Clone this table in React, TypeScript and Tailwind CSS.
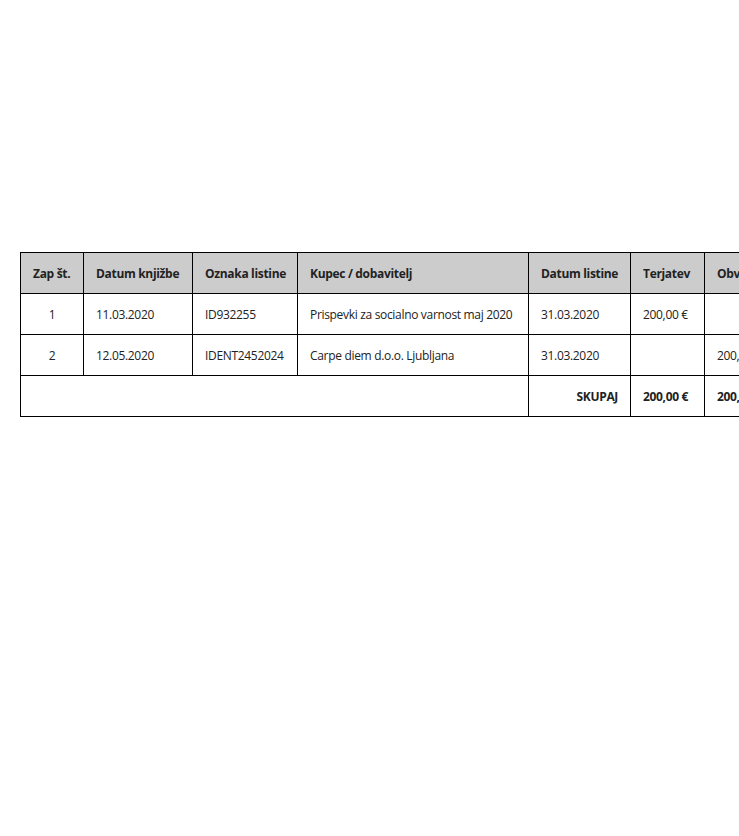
export default function App() {
  const th = 'border border-black bg-[#cccccc] px-3 pt-[13px] pb-[11px] font-bold text-left leading-4 whitespace-nowrap';
  const td = 'border border-black px-3 pt-[13px] pb-[11px] leading-4 whitespace-nowrap';
  return (
    <div className="w-[739px] h-[836px] overflow-hidden bg-white">
      <div
        className="pt-[252px] pl-[20px] text-[12px] tracking-[-0.32px] text-[#222222]"
        style={{ fontFamily: '"Open Sans", "Noto Sans", sans-serif' }}
      >
        <table className="border-collapse table-fixed w-[780px]">
          <colgroup>
            <col className="w-[63px]" />
            <col className="w-[109px]" />
            <col className="w-[105px]" />
            <col className="w-[231px]" />
            <col className="w-[102px]" />
            <col className="w-[74px]" />
            <col className="w-[96px]" />
          </colgroup>
          <thead>
            <tr>
              <th className={th + ' text-center'}>Zap št.</th>
              <th className={th}>Datum knjižbe</th>
              <th className={th}>Oznaka listine</th>
              <th className={th}>Kupec / dobavitelj</th>
              <th className={th}>Datum listine</th>
              <th className={th}>Terjatev</th>
              <th className={th}>Obveznost</th>
            </tr>
          </thead>
          <tbody>
            <tr>
              <td className={td + ' text-center'}>1</td>
              <td className={td}>11.03.2020</td>
              <td className={td}>ID932255</td>
              <td className={td}>Prispevki za socialno varnost maj 2020</td>
              <td className={td}>31.03.2020</td>
              <td className={td}>200,00 €</td>
              <td className={td}></td>
            </tr>
            <tr>
              <td className={td + ' text-center'}>2</td>
              <td className={td}>12.05.2020</td>
              <td className={td}>IDENT2452024</td>
              <td className={td}>Carpe diem d.o.o. Ljubljana</td>
              <td className={td}>31.03.2020</td>
              <td className={td}></td>
              <td className={td}>200,00 €</td>
            </tr>
            <tr>
              <td className={td} colSpan={4}></td>
              <td className={td + ' text-right font-bold'}>SKUPAJ</td>
              <td className={td + ' font-bold'}>200,00 €</td>
              <td className={td + ' font-bold'}>200,00 €</td>
            </tr>
          </tbody>
        </table>
      </div>
    </div>
  );
}
